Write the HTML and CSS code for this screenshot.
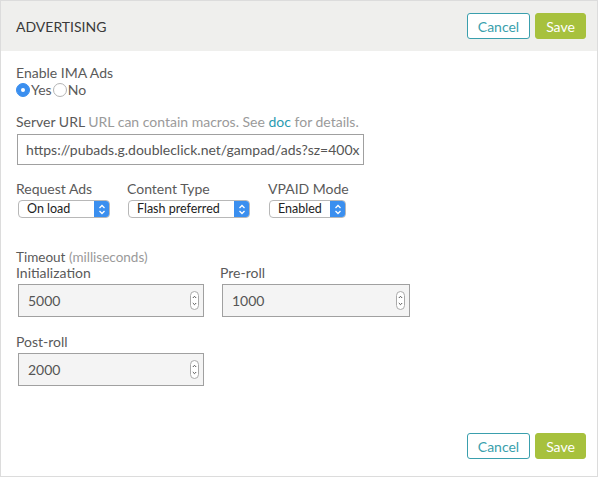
FILE: index.html
```html
<!DOCTYPE html>
<html>
<head>
<meta charset="utf-8">
<link rel="stylesheet" href="styles.css">
</head>
<body>
<div class="panel">
  <div class="header">
    <div class="title">ADVERTISING</div>
    <div class="actions">
      <button class="btn cancel">Cancel</button>
      <button class="btn save">Save</button>
    </div>
  </div>
  <div class="content">
    <div class="field enable">
      <div class="label">Enable IMA Ads</div>
      <div class="radios">
        <span class="radio on"></span><span class="rlabel">Yes</span>
        <span class="radio"></span><span class="rlabel">No</span>
      </div>
    </div>
    <div class="field url">
      <div class="label">Server URL <span class="hint">URL can contain macros. See <a class="link">doc</a> for details.</span></div>
      <div class="textbox">https://pubads.g.doubleclick.net/gampad/ads?sz=400x</div>
    </div>
    <div class="selects">
      <div class="sel-field f1">
        <div class="label">Request Ads</div>
        <div class="select w1"><span class="stext">On load</span><span class="sarrow"><svg width="8" height="11" viewBox="0 0 8 11"><path d="M1.5 4 L4 1.5 L6.5 4 M1.5 7 L4 9.5 L6.5 7" fill="none" stroke="#fff" stroke-width="1.3"/></svg></span></div>
      </div>
      <div class="sel-field f2">
        <div class="label">Content Type</div>
        <div class="select w2"><span class="stext">Flash preferred</span><span class="sarrow"><svg width="8" height="11" viewBox="0 0 8 11"><path d="M1.5 4 L4 1.5 L6.5 4 M1.5 7 L4 9.5 L6.5 7" fill="none" stroke="#fff" stroke-width="1.3"/></svg></span></div>
      </div>
      <div class="sel-field f3">
        <div class="label">VPAID Mode</div>
        <div class="select w3"><span class="stext">Enabled</span><span class="sarrow"><svg width="8" height="11" viewBox="0 0 8 11"><path d="M1.5 4 L4 1.5 L6.5 4 M1.5 7 L4 9.5 L6.5 7" fill="none" stroke="#fff" stroke-width="1.3"/></svg></span></div>
      </div>
    </div>
    <div class="timeout">
      <div class="tlabel">Timeout <span class="hint">(milliseconds)</span></div>
      <div class="tgrid">
        <div class="nfield">
          <div class="label">Initialization</div>
          <div class="number"><span>5000</span><span class="spin"><svg width="9" height="19" viewBox="0 0 9 19"><rect x="0.5" y="0.5" width="8" height="18" rx="4" fill="#fff" stroke="#aaa"/><path d="M2.8 7 L4.5 5.3 L6.2 7 M2.8 12 L4.5 13.7 L6.2 12" fill="none" stroke="#555" stroke-width="1"/></svg></span></div>
        </div>
        <div class="nfield">
          <div class="label">Pre-roll</div>
          <div class="number"><span>1000</span><span class="spin"><svg width="9" height="19" viewBox="0 0 9 19"><rect x="0.5" y="0.5" width="8" height="18" rx="4" fill="#fff" stroke="#aaa"/><path d="M2.8 7 L4.5 5.3 L6.2 7 M2.8 12 L4.5 13.7 L6.2 12" fill="none" stroke="#555" stroke-width="1"/></svg></span></div>
        </div>
        <div class="nfield">
          <div class="label">Post-roll</div>
          <div class="number"><span>2000</span><span class="spin"><svg width="9" height="19" viewBox="0 0 9 19"><rect x="0.5" y="0.5" width="8" height="18" rx="4" fill="#fff" stroke="#aaa"/><path d="M2.8 7 L4.5 5.3 L6.2 7 M2.8 12 L4.5 13.7 L6.2 12" fill="none" stroke="#555" stroke-width="1"/></svg></span></div>
        </div>
      </div>
    </div>
    <div class="footer">
      <button class="btn cancel">Cancel</button>
      <button class="btn save">Save</button>
    </div>
  </div>
</div>
</body>
</html>
```
FILE: styles.css
```css
* { box-sizing: border-box; }
html, body { margin: 0; padding: 0; background: #fff; }
body { font-family: "Lato", "Liberation Sans", sans-serif; font-size: 14px; color: #5a5a5a; }
.panel {
  width: 598px; height: 477px;
  border: 1px solid #dcdcdc;
  display: flex; flex-direction: column;
}
.header {
  height: 50px; background: #efefed;
  display: flex; align-items: center; justify-content: space-between;
  padding: 0 11px 0 15px;
}
.title { font-size: 14px; color: #3a3a3a; }
.actions, .footer { display: flex; gap: 5px; }
.btn {
  font-family: inherit; font-size: 14px; height: 26px; border-radius: 3px;
  padding: 0; cursor: pointer;
}
.cancel { width: 63px; background: #fff; border: 1px solid #3a9fad; color: #3a9fad; }
.save { width: 51px; background: #a7c13d; border: 1px solid #a7c13d; color: #fff; }
.content { flex: 1; padding: 13px 11px 17px 15px; display: flex; flex-direction: column; }
.label { line-height: 17px; color: #5a5a5a; }
.hint { color: #9a9a9a; }
.link { color: #2a9bb1; }
.radios { display: flex; align-items: center; height: 17px; }
.radio { width: 14px; height: 14px; border-radius: 50%; border: 1px solid #b4b4b4; background: #fff; display: inline-block; }
.radio.on { background: #3b8fef; border-color: #3b8fef; position: relative; }
.radio.on::after { content: ""; position: absolute; left: 4px; top: 4px; width: 4px; height: 4px; border-radius: 50%; background: #fff; }
.rlabel { margin-left: 1px; margin-right: 1px; }
.url { margin-top: 15px; }
.textbox {
  margin-top: 4px; margin-left: 1px; width: 347px; height: 31px;
  border: 1px solid #a0a0a0; padding: 0 8px; line-height: 29px;
  white-space: nowrap; overflow: hidden; color: #555; font-size: 14px;
}
.selects { display: flex; margin-top: 15px; }
.f1 { width: 111px; }
.f2 { width: 141px; }
.select {
  margin-top: 3px; height: 18px; display: flex;
  border: 1px solid #b8b8b8; border-radius: 4px; background: #fff; overflow: hidden;
  font-size: 12.5px; color: #222;
}
.w1 { width: 92px; margin-left: 2px; }
.w2 { width: 122px; margin-left: 1px; }
.w3 { width: 77px; margin-left: 1px; }
.stext { flex: 1; padding-left: 8px; line-height: 16px; }
.sarrow { width: 15px; background: #3b8fef; display: flex; align-items: center; justify-content: center; }
.timeout { margin-top: 32px; }
.tlabel { font-size: 13.5px; line-height: 14px; color: #5a5a5a; }
.tgrid { display: grid; grid-template-columns: 188px 190px; column-gap: 16px; row-gap: 16px; }
.nfield .label { line-height: 17px; margin-bottom: 3px; }
.number {
  margin-left: 2px; height: 33px; border: 1px solid #a0a0a0; background: #f4f4f4;
  display: flex; align-items: center; justify-content: space-between; padding: 0 4px 0 9px;
  color: #555;
}
.spin { display: flex; }
.footer { margin-top: auto; justify-content: flex-end; }
```
